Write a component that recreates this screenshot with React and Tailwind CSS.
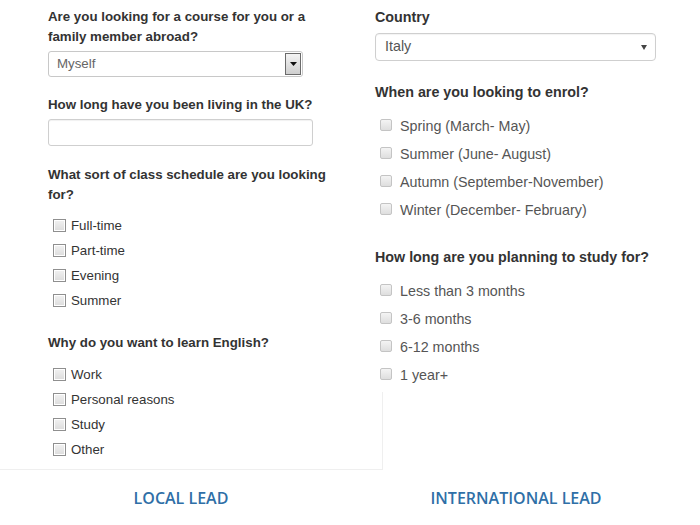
import React from "react";

function OldBox() {
  return (
    <span className="w-[13px] h-[13px] border border-[#8f8f8f] bg-gradient-to-b from-[#f2f2f2] to-[#dcdcdc] shadow-[inset_0_0_0_1px_#fff] shrink-0" />
  );
}

function NewBox() {
  return (
    <span className="w-[12px] h-[12px] rounded-[2px] border border-[#c4c4c4] bg-gradient-to-b from-[#f4f4f4] to-[#dedede] shrink-0 -mt-[5px]" />
  );
}

function LeftCheck({ label }) {
  return (
    <div className="h-[25px] flex items-center pl-[5px] gap-[5px] text-[13.3px] text-[#333]">
      <OldBox />
      <span>{label}</span>
    </div>
  );
}

function RightCheck({ label }) {
  return (
    <div className="h-[28px] flex items-center pl-[5px] gap-[8px] text-[14.3px] text-[#555]">
      <NewBox />
      <span>{label}</span>
    </div>
  );
}

export default function App() {
  return (
    <div
      className="w-[700px] h-[525px] bg-white overflow-hidden"
      style={{ fontFamily: '"Liberation Sans", Arial, sans-serif' }}
    >
      <div className="flex h-[470px]">
        {/* local lead form */}
        <div className="w-[383px] shrink-0 border-r border-b border-[#efefef] pl-[48px] pt-[7px]">
          <p className="text-[13.3px] leading-[20px] font-bold text-[#333]">
            Are you looking for a course for you or a
            <br />
            family member abroad?
          </p>
          <div className="mt-[4px] w-[255px] h-[26px] border border-[#c8c8c8] rounded-[3px] flex items-center justify-between pl-[8px] pr-[1px]">
            <span className="text-[13.3px] text-[#666]">Myself</span>
            <span className="w-[16px] h-[22px] border border-[#6b6b6b] bg-gradient-to-b from-[#f4f4f4] to-[#cfcfcf] flex items-center justify-center">
              <svg width="7" height="4" viewBox="0 0 7 4">
                <path d="M0 0h7L3.5 4z" fill="#111" />
              </svg>
            </span>
          </div>

          <p className="mt-[18px] text-[13.3px] leading-[20px] font-bold text-[#333]">
            How long have you been living in the UK?
          </p>
          <div className="mt-[4px] w-[265px] h-[27px] border border-[#cfcfcf] rounded-[3px] shadow-[inset_0_1px_1px_rgba(0,0,0,0.06)]" />

          <p className="mt-[19px] text-[13.3px] leading-[20px] font-bold text-[#333]">
            What sort of class schedule are you looking
            <br />
            for?
          </p>
          <div className="mt-[8px]">
            <LeftCheck label="Full-time" />
            <LeftCheck label="Part-time" />
            <LeftCheck label="Evening" />
            <LeftCheck label="Summer" />
          </div>

          <p className="mt-[20px] text-[13.3px] leading-[20px] font-bold text-[#333]">
            Why do you want to learn English?
          </p>
          <div className="mt-[9px]">
            <LeftCheck label="Work" />
            <LeftCheck label="Personal reasons" />
            <LeftCheck label="Study" />
            <LeftCheck label="Other" />
          </div>
        </div>

        {/* international lead form */}
        <div className="relative z-10 -ml-[8px] w-[310px] h-[392px] bg-white pt-[7px]">
          <p className="text-[14.3px] leading-[20px] font-bold text-[#333]">Country</p>
          <div className="mt-[6px] w-[281px] h-[28px] border border-[#cfcfcf] rounded-[4px] shadow-[inset_0_1px_1px_rgba(0,0,0,0.05)] flex items-center justify-between pl-[9px] pr-[8px]">
            <span className="text-[14.3px] text-[#555]">Italy</span>
            <svg width="6" height="5" viewBox="0 0 6 5">
              <path d="M0 0h6L3 5z" fill="#444" />
            </svg>
          </div>

          <p className="mt-[21px] text-[14.3px] leading-[20px] font-bold text-[#333]">
            When are you looking to enrol?
          </p>
          <div className="mt-[11px]">
            <RightCheck label="Spring (March- May)" />
            <RightCheck label="Summer (June- August)" />
            <RightCheck label="Autumn (September-November)" />
            <RightCheck label="Winter (December- February)" />
          </div>

          <p className="mt-[22px] text-[14.3px] leading-[20px] font-bold text-[#333]">
            How long are you planning to study for?
          </p>
          <div className="mt-[11px]">
            <RightCheck label="Less than 3 months" />
            <RightCheck label="3-6 months" />
            <RightCheck label="6-12 months" />
            <RightCheck label="1 year+" />
          </div>
        </div>
      </div>

      <div
        className="grid grid-cols-[362px_308px] mt-[18px] text-[16px] font-semibold text-[#2f6fa7] leading-[20px]"
        style={{ fontFamily: '"Open Sans", sans-serif' }}
      >
        <div className="text-center">LOCAL LEAD</div>
        <div className="text-center">INTERNATIONAL LEAD</div>
      </div>
    </div>
  );
}
